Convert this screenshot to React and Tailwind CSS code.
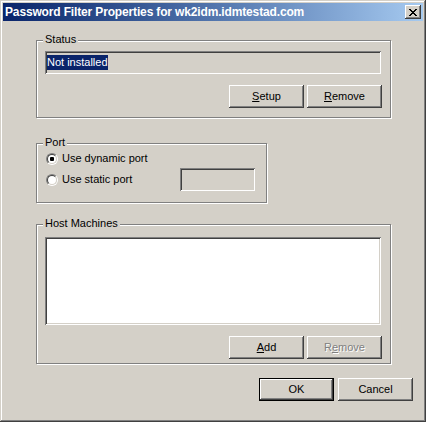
import React from 'react'

const raised = 'shadow-[inset_-1px_-1px_#404040,inset_1px_1px_#ffffff,inset_-2px_-2px_#808080,inset_2px_2px_#d4d0c8]'
const sunken = 'shadow-[inset_1px_1px_#808080,inset_-1px_-1px_#ffffff,inset_2px_2px_#404040,inset_-2px_-2px_#d4d0c8]'

function Button({ children, isDefault, disabled }) {
  if (isDefault) {
    return (
      <div className="w-[75px] h-[23px] border border-black">
        <div className={`w-full h-full bg-[#d4d0c8] flex items-center justify-center ${raised}`}>
          {children}
        </div>
      </div>
    )
  }
  return (
    <div
      className={`w-[75px] h-[23px] bg-[#d4d0c8] flex items-center justify-center ${raised} ${
        disabled ? 'text-[#808080] [text-shadow:1px_1px_0_#ffffff]' : ''
      }`}
    >
      {children}
    </div>
  )
}

function GroupBox({ label, className, children }) {
  return (
    <div className={`relative border border-[#808080] shadow-[inset_1px_1px_#ffffff,1px_1px_#ffffff] ${className}`}>
      <span className="absolute left-[6px] -top-[8px] px-[2px] bg-[#d4d0c8] leading-[13px]">{label}</span>
      {children}
    </div>
  )
}

function Radio({ checked }) {
  return (
    <div className="w-[12px] h-[12px] rounded-full border border-t-[#808080] border-l-[#808080] border-b-white border-r-white">
      <div className="w-full h-full rounded-full border border-t-[#404040] border-l-[#404040] border-b-[#d4d0c8] border-r-[#d4d0c8] bg-white flex items-center justify-center">
        {checked && <div className="w-[4px] h-[4px] rounded-[1px] bg-black" />}
      </div>
    </div>
  )
}

export default function App() {
  return (
    <div className="w-[426px] h-[422px] bg-[#d4d0c8] p-[3px] text-[11px] text-black font-['Liberation_Sans',Arial,sans-serif] shadow-[inset_-1px_-1px_#404040,inset_1px_1px_#d4d0c8,inset_-2px_-2px_#808080,inset_2px_2px_#ffffff] flex flex-col">
      {/* title bar */}
      <div className="h-[18px] flex items-center justify-between bg-gradient-to-r from-[#0a246a] to-[#a6caf0]">
        <span className="pl-[2px] text-white font-bold text-[12px] tracking-[-0.15px] leading-[18px] whitespace-nowrap">
          Password Filter Properties for wk2idm.idmtestad.com
        </span>
        <div className={`mr-[2px] w-[16px] h-[14px] bg-[#d4d0c8] flex items-center justify-center ${raised}`}>
          <svg width="8" height="7" viewBox="0 0 8 7" shapeRendering="crispEdges">
            <path d="M0 0h2v1h-2zM6 0h2v1h-2zM1 1h2v1h-2zM5 1h2v1h-2zM2 2h4v1h-4zM3 3h2v1h-2zM2 4h4v1h-4zM1 5h2v1h-2zM5 5h2v1h-2zM0 6h2v1h-2zM6 6h2v1h-2z" fill="#000" />
          </svg>
        </div>
      </div>

      {/* client */}
      <div className="flex-1 flex flex-col pl-[33px] pr-[10px]">
        <GroupBox label="Status" className="mt-[19px] w-[355px] h-[78px]">
          <div className="pl-[8px] pt-[10px]">
            <div className={`w-[336px] h-[23px] bg-[#d4d0c8] p-[2px] flex items-center ${sunken}`}>
              <span className="bg-[#0a246a] text-white leading-[15px]">Not installed</span>
            </div>
            <div className="flex justify-end gap-[3px] pr-[8px] mt-[11px]">
              <Button><span><u>S</u>etup</span></Button>
              <Button><span><u>R</u>emove</span></Button>
            </div>
          </div>
        </GroupBox>

        <GroupBox label="Port" className="mt-[25px] w-[231px] h-[60px]">
          <div className="pl-[9px] pt-[8px]">
            <div className="h-[13px] flex items-center gap-[4px]">
              <Radio checked />
              <span>Use dynamic port</span>
            </div>
            <div className="mt-[3px] h-[23px] flex items-center">
              <Radio />
              <span className="ml-[4px] w-[118px]">Use static port</span>
              <div className={`w-[75px] h-[23px] bg-[#d4d0c8] ${sunken}`} />
            </div>
          </div>
        </GroupBox>

        <GroupBox label="Host Machines" className="mt-[21px] w-[355px] h-[140px]">
          <div className="pl-[8px] pt-[12px]">
            <div className={`w-[336px] h-[88px] bg-white ${sunken}`} />
            <div className="flex justify-end gap-[3px] pr-[8px] mt-[11px]">
              <Button><span><u>A</u>dd</span></Button>
              <Button disabled><span>R<u>e</u>move</span></Button>
            </div>
          </div>
        </GroupBox>

        <div className="mt-[14px] flex justify-end gap-[4px]">
          <Button isDefault>OK</Button>
          <Button>Cancel</Button>
        </div>
      </div>
    </div>
  )
}
